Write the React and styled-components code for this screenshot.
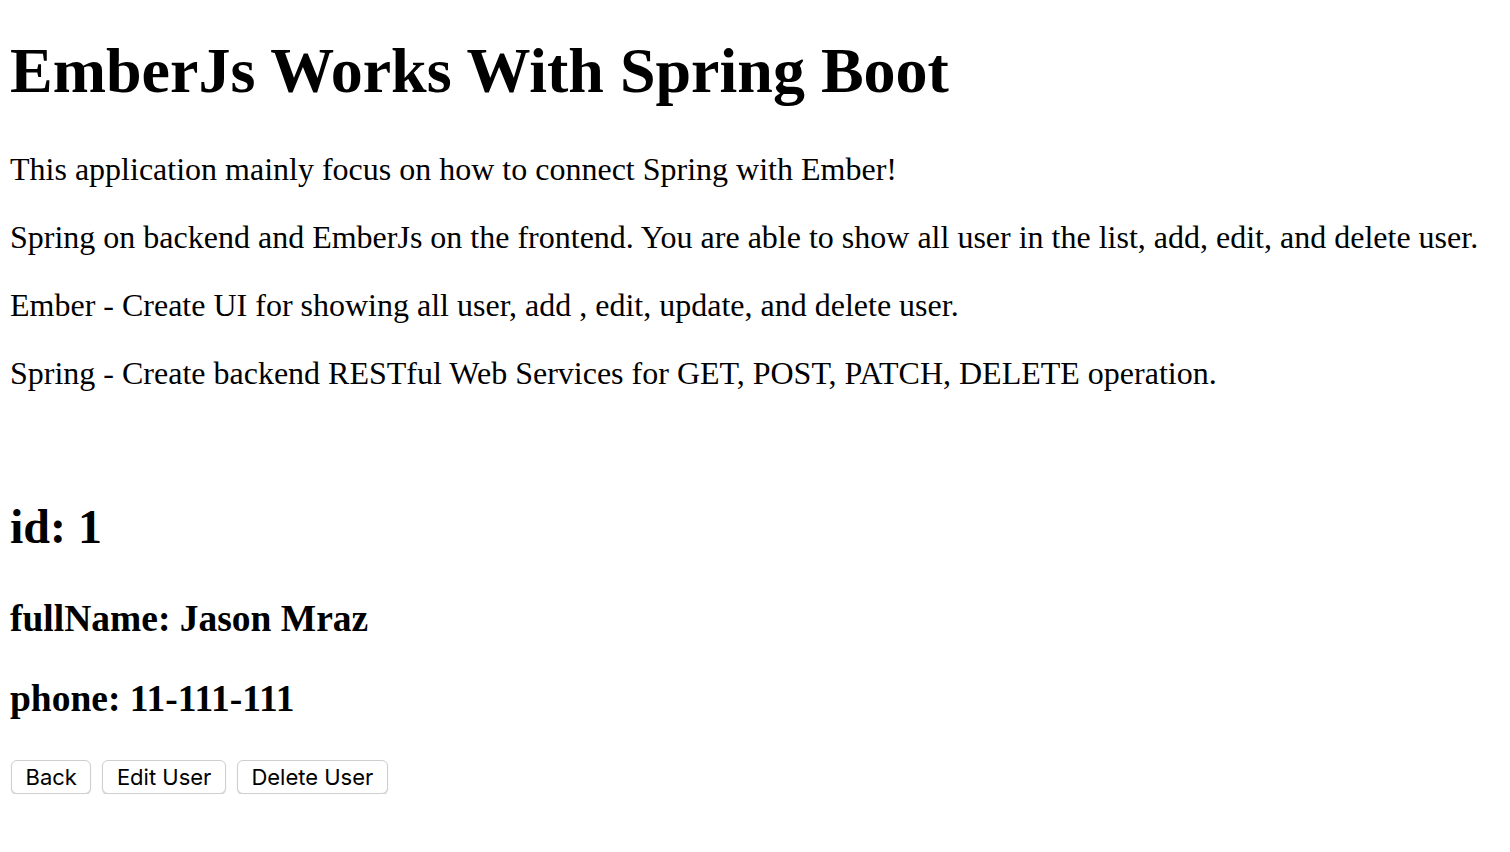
import React from "react";
import styled, { createGlobalStyle } from "styled-components";

const GlobalStyle = createGlobalStyle`
  html, body {
    margin: 0;
    padding: 0;
    background: #ffffff;
  }
  body {
    padding: 0 10px;
    font-family: "Liberation Serif", "Times New Roman", serif;
    font-size: 32px;
    color: #000;
  }
`;

const Page = styled.div`
  display: flex;
  flex-direction: column;
`;

const Title = styled.h1`
  font-size: 64px;
  font-weight: bold;
  margin: 34px 0 43px;
  line-height: normal;
`;

const Text = styled.p`
  font-size: 32px;
  margin: 0 0 32px;
  line-height: 36px;
`;

const Detail = styled.div`
  margin-top: 76px;
`;

const Heading = styled.h2`
  font-size: ${({ $size }) => $size}px;
  font-weight: bold;
  margin: 0 0 ${({ $gap }) => $gap}px;
  line-height: normal;
`;

const Actions = styled.div`
  display: flex;
  gap: 11px;
  padding: 3px 0 0 1px;
`;

const Button = styled.button`
  font-family: Inter, "Liberation Sans", sans-serif;
  font-size: 22px;
  color: #000;
  background: #fff;
  border: 1px solid #cfcfcf;
  border-radius: 6px;
  box-shadow: 0 1px 1px rgba(0, 0, 0, 0.18);
  height: 34px;
  padding: 0 13.5px;
  cursor: pointer;
`;

const App = () => {
  return (
    <Page>
      <GlobalStyle />
      <Title>EmberJs Works With Spring Boot</Title>
      <Text>This application mainly focus on how to connect Spring with Ember!</Text>
      <Text>
        Spring on backend and EmberJs on the frontend. You are able to show all
        user in the list, add, edit, and delete user.
      </Text>
      <Text>Ember - Create UI for showing all user, add , edit, update, and delete user.</Text>
      <Text>Spring - Create backend RESTful Web Services for GET, POST, PATCH, DELETE operation.</Text>
      <Detail>
        <Heading $size={48} $gap={43}>id: 1</Heading>
        <Heading as="h3" $size={37.5} $gap={37}>fullName: Jason Mraz</Heading>
        <Heading as="h3" $size={37.5} $gap={37}>phone: 11-111-111</Heading>
        <Actions>
          <Button>Back</Button>
          <Button>Edit User</Button>
          <Button>Delete User</Button>
        </Actions>
      </Detail>
    </Page>
  );
};

export default App;
